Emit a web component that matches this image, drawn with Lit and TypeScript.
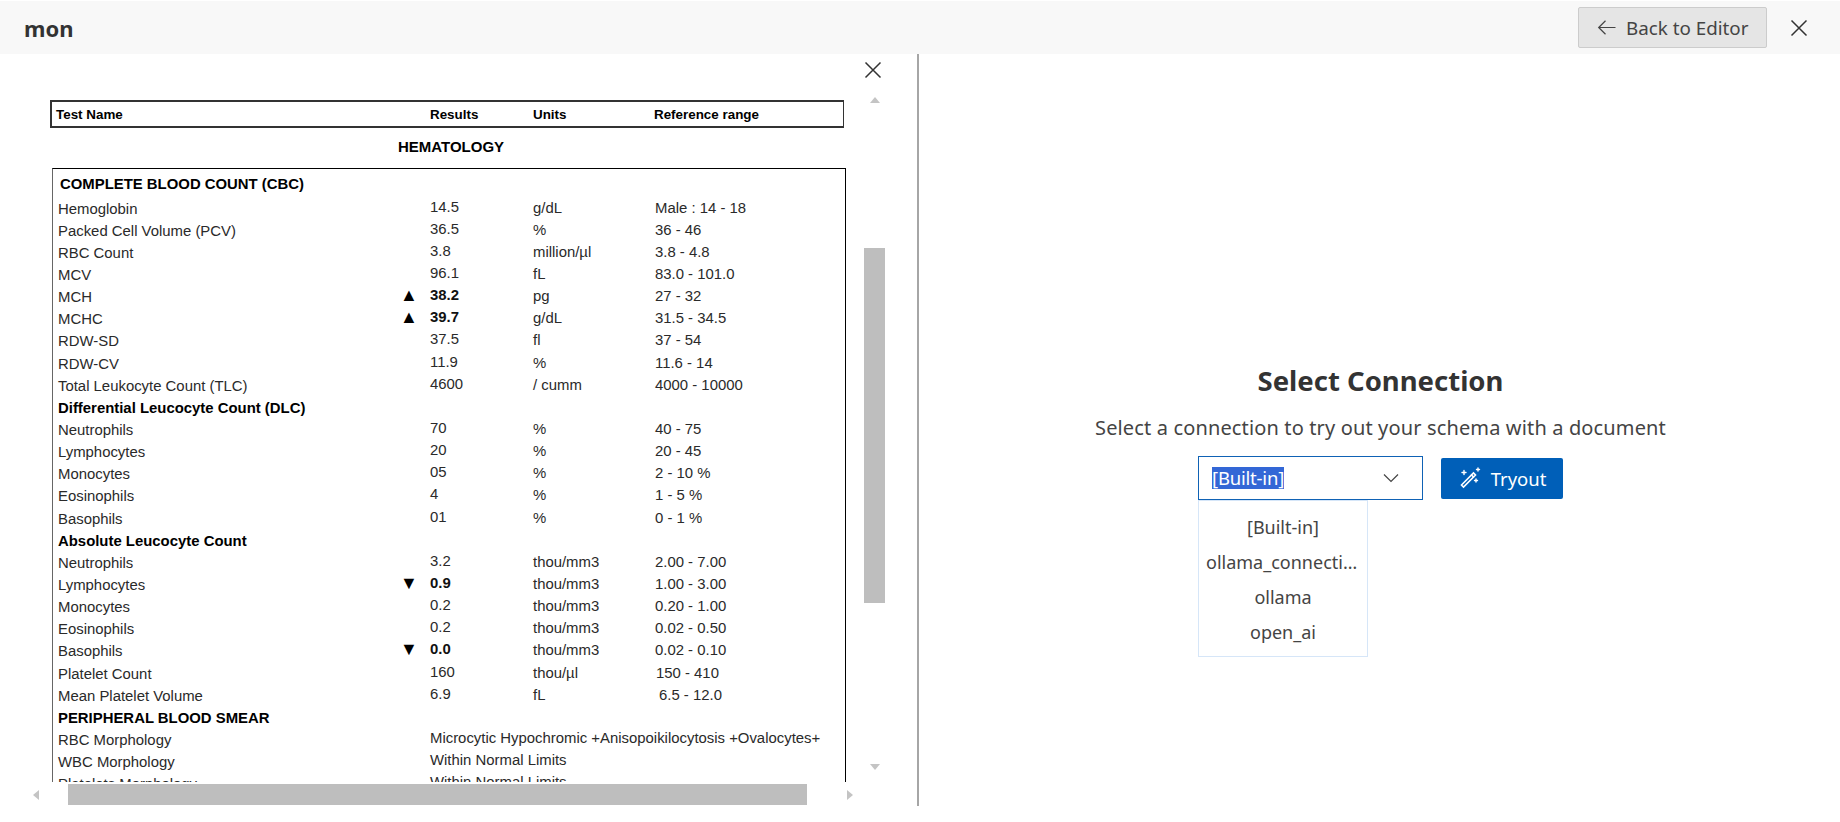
import { LitElement, html, css } from 'lit';
import { customElement } from 'lit/decorators.js';

type Row = { name: string; flag?: string; result?: string; units?: string; range?: string; high?: boolean; head?: boolean; wide?: boolean; nudge?: number };

const rows: Row[] = [
  { name: 'COMPLETE BLOOD COUNT (CBC)', head: true, nudge: 2 },
  { name: 'Hemoglobin', result: '14.5', units: 'g/dL', range: 'Male : 14 - 18' },
  { name: 'Packed Cell Volume (PCV)', result: '36.5', units: '%', range: '36 - 46' },
  { name: 'RBC Count', result: '3.8', units: 'million/µl', range: '3.8 - 4.8' },
  { name: 'MCV', result: '96.1', units: 'fL', range: '83.0 - 101.0' },
  { name: 'MCH', flag: '▲', result: '38.2', high: true, units: 'pg', range: '27 - 32' },
  { name: 'MCHC', flag: '▲', result: '39.7', high: true, units: 'g/dL', range: '31.5 - 34.5' },
  { name: 'RDW-SD', result: '37.5', units: 'fl', range: '37 - 54' },
  { name: 'RDW-CV', result: '11.9', units: '%', range: '11.6 - 14' },
  { name: 'Total Leukocyte Count (TLC)', result: '4600', units: '/ cumm', range: '4000 - 10000' },
  { name: 'Differential Leucocyte Count (DLC)', head: true },
  { name: 'Neutrophils', result: '70', units: '%', range: '40 - 75' },
  { name: 'Lymphocytes', result: '20', units: '%', range: '20 - 45' },
  { name: 'Monocytes', result: '05', units: '%', range: '2 - 10 %' },
  { name: 'Eosinophils', result: '4', units: '%', range: '1 - 5 %' },
  { name: 'Basophils', result: '01', units: '%', range: '0 - 1 %' },
  { name: 'Absolute Leucocyte Count', head: true },
  { name: 'Neutrophils', result: '3.2', units: 'thou/mm3', range: '2.00 - 7.00' },
  { name: 'Lymphocytes', flag: '▼', result: '0.9', high: true, units: 'thou/mm3', range: '1.00 - 3.00' },
  { name: 'Monocytes', result: '0.2', units: 'thou/mm3', range: '0.20 - 1.00' },
  { name: 'Eosinophils', result: '0.2', units: 'thou/mm3', range: '0.02 - 0.50' },
  { name: 'Basophils', flag: '▼', result: '0.0', high: true, units: 'thou/mm3', range: '0.02 - 0.10' },
  { name: 'Platelet Count', result: '160', units: 'thou/µl', range: '150 - 410', nudge: 1 },
  { name: 'Mean Platelet Volume', result: '6.9', units: 'fL', range: '6.5 - 12.0', nudge: 4 },
  { name: 'PERIPHERAL BLOOD SMEAR', head: true },
  { name: 'RBC Morphology', result: 'Microcytic Hypochromic +Anisopoikilocytosis +Ovalocytes+', wide: true },
  { name: 'WBC Morphology', result: 'Within Normal Limits', wide: true },
  { name: 'Platelets Morphology', result: 'Within Normal Limits', wide: true },
];

const connections = ['[Built-in]', 'ollama_connection_1', 'ollama', 'open_ai'];

@customElement('app-report')
export class AppReport extends LitElement {
  static styles = css`
    :host {
      display: block;
      height: 100%;
      overflow: hidden;
      font-family: 'Liberation Sans', Arial, sans-serif;
      color: #2a2a2a;
      padding-top: 46px;
      box-sizing: border-box;
    }

    .head-box {
      display: grid;
      grid-template-columns: 374px 103px 121px 1fr;
      align-items: center;
      margin-left: 50px;
      width: 794px;
      height: 28px;
      box-sizing: border-box;
      border: 1px solid #333;
      border-width: 2px 1px 2px 2px;
      padding-left: 4px;
      font-size: 13.4px;
      font-weight: bold;
      color: #000;
    }

    .section {
      margin: 0 0 0 50px;
      width: 795px;
      height: 40px;
      line-height: 38px;
      padding-left: 7px;
      box-sizing: border-box;
      text-align: center;
      font-size: 15px;
      font-weight: bold;
      color: #000;
    }

    .box {
      margin-left: 52px;
      width: 794px;
      box-sizing: border-box;
      border: 1px solid #000;
      border-left-color: #666;
      padding: 4px 0 0 5px;
    }

    .row {
      display: grid;
      grid-template-columns: 342px 30px 103px 122px 1fr;
      height: 22.15px;
      line-height: 22px;
      font-size: 14.9px;
      white-space: nowrap;
    }

    .row:first-child {
      margin-bottom: 2.5px;
    }

    .row .head {
      font-weight: bold;
      color: #000;
      font-size: 14.9px;
    }

    .result,
    .flag {
      line-height: 18px;
    }

    .units,
    .range {
      line-height: 20px;
    }

    .flag {
      color: #000;
      font-size: 18px;
    }

    .high {
      font-weight: bold;
      color: #111;
    }

    .wide {
      grid-column: 3 / -1;
    }
  `;

  render() {
    return html`
      <div class="head-box">
        <span>Test Name</span><span>Results</span><span>Units</span><span>Reference range</span>
      </div>
      <div class="section">HEMATOLOGY</div>
      <div class="box">
        ${rows.map((r) => html`
          <div class="row">
            <span class=${r.head ? 'head' : ''} style=${r.nudge && r.head ? `padding-left:${r.nudge}px` : ''}>${r.name}</span>
            ${r.head ? '' : html`
              <span class="flag">${r.flag ?? ''}</span>
              <span class="result ${r.high ? 'high' : ''} ${r.wide ? 'wide' : ''}">${r.result}</span>
              ${r.wide ? '' : html`
                <span class="units">${r.units}</span>
                <span class="range" style=${r.nudge ? `padding-left:${r.nudge}px` : ''}>${r.range}</span>
              `}
            `}
          </div>
        `)}
      </div>
    `;
  }
}

@customElement('app-root')
export class AppRoot extends LitElement {
  static styles = css`
    :host {
      display: block;
      height: 822px;
      overflow: hidden;
      background: #fff;
      font-family: 'Noto Sans', 'Open Sans', sans-serif;
      color: #333;
    }

    .topbar {
      display: flex;
      align-items: center;
      box-sizing: border-box;
      height: 53px;
      margin-top: 1px;
      padding: 0 31px 0 24px;
      background: #f8f8f8;
    }

    .title {
      flex: 1;
      font-size: 22px;
      font-weight: 700;
      color: #333;
    }

    .back {
      display: flex;
      align-items: center;
      gap: 9px;
      box-sizing: border-box;
      height: 41px;
      width: 189px;
      padding: 0 0 0 18px;
      margin-right: 22px;
      border: 1px solid #ccc;
      border-radius: 2px;
      background: #e5e5e5;
      color: #444;
      font: inherit;
      font-size: 18.8px;
    }

    .icon-btn {
      display: flex;
      padding: 0;
      border: 0;
      background: none;
      color: #333;
    }

    .split {
      display: flex;
      height: 752px;
    }

    .left {
      position: relative;
      display: grid;
      grid-template-columns: 864px 21px 1fr;
      grid-template-rows: 728px 1fr;
      width: 917px;
      border-right: 2px solid #a6a6a6;
    }

    .doc {
      min-width: 0;
      min-height: 0;
    }

    .vbar {
      display: flex;
      flex-direction: column;
      align-items: center;
    }

    .up {
      margin-top: 43px;
      width: 0;
      border: 5.5px solid transparent;
      border-top: 0;
      border-bottom: 6px solid #c4c4c4;
    }

    .vthumb {
      flex: none;
      margin-top: 145px;
      width: 21px;
      height: 355px;
      background: #bebebe;
    }

    .down {
      margin-top: 161px;
      width: 0;
      border: 5.5px solid transparent;
      border-bottom: 0;
      border-top: 6px solid #c4c4c4;
    }

    .hbar {
      grid-column: 1 / 3;
      display: flex;
      align-items: center;
      height: 21px;
      margin-top: 2px;
    }

    .lt {
      margin-left: 33px;
      border: 5.5px solid transparent;
      border-left: 0;
      border-right: 6px solid #c4c4c4;
    }

    .hthumb {
      margin-left: 29px;
      width: 739px;
      height: 21px;
      background: #bebebe;
    }

    .rt {
      margin-left: 40px;
      border: 5.5px solid transparent;
      border-right: 0;
      border-left: 6px solid #c4c4c4;
    }

    .doc-close {
      position: absolute;
      top: 6px;
      left: 863px;
      color: #333;
    }

    .right {
      flex: 1;
      display: flex;
      flex-direction: column;
      align-items: center;
      padding: 307px 0 0 2px;
      box-sizing: border-box;
    }

    h2 {
      margin: 0;
      font-size: 27.5px;
      line-height: 40px;
      font-weight: 700;
      color: #333;
    }

    .sub {
      margin: 12px 0 0;
      font-size: 20px;
      letter-spacing: 0.14px;
      line-height: 30px;
      color: #444;
    }

    .controls {
      display: flex;
      align-items: center;
      gap: 18px;
      margin-top: 13px;
    }

    .combo {
      position: relative;
      display: flex;
      align-items: center;
      justify-content: space-between;
      box-sizing: border-box;
      width: 225px;
      height: 44px;
      padding: 0 22px 0 13px;
      border: 1px solid #0f62b5;
    }

    .selected {
      background: #3367d6;
      color: #fff;
      font-size: 18.5px;
      line-height: 22px;
      letter-spacing: -0.2px;
    }

    .menu {
      position: absolute;
      top: 43px;
      left: -1px;
      box-sizing: border-box;
      width: 170px;
      height: 157px;
      padding: 9px 7px 0;
      background: #fff;
      border: 1px solid #d6e6f8;
    }

    .menu div {
      height: 35px;
      line-height: 35px;
      font-size: 18px;
      text-align: center;
      color: #444;
      overflow: hidden;
      white-space: nowrap;
      text-overflow: ellipsis;
    }

    .tryout {
      display: flex;
      align-items: center;
      justify-content: center;
      gap: 9px;
      box-sizing: border-box;
      width: 122px;
      height: 41px;
      padding: 0;
      border: 0;
      border-radius: 2px;
      background: #005fb8;
      color: #fff;
      font: inherit;
      font-size: 18.5px;
    }
  `;

  render() {
    return html`
      <div class="topbar">
        <div class="title">mon</div>
        <button class="back">
          <svg width="20" height="20" viewBox="0 0 20 20" fill="none" stroke="currentColor" stroke-width="1.2"><path d="M1.5 9.5h17M8.5 2.8 1.7 9.5l6.8 6.7"/></svg>
          Back to Editor
        </button>
        <button class="icon-btn" aria-label="Close">
          <svg width="20" height="20" viewBox="0 0 20 20" fill="none" stroke="currentColor" stroke-width="1.5"><path d="M2.5 2.5l15 15M17.5 2.5l-15 15"/></svg>
        </button>
      </div>
      <div class="split">
        <section class="left">
          <div class="doc"><app-report></app-report></div>
          <div class="vbar">
            <div class="up"></div>
            <div class="vthumb"></div>
            <div class="down"></div>
          </div>
          <div></div>
          <div class="hbar">
            <div class="lt"></div>
            <div class="hthumb"></div>
            <div class="rt"></div>
          </div>
          <button class="icon-btn doc-close" aria-label="Close document">
            <svg width="20" height="20" viewBox="0 0 20 20" fill="none" stroke="currentColor" stroke-width="1.5"><path d="M2.5 2.5l15 15M17.5 2.5l-15 15"/></svg>
          </button>
        </section>
        <section class="right">
          <h2>Select Connection</h2>
          <p class="sub">Select a connection to try out your schema with a document</p>
          <div class="controls">
            <div class="combo">
              <span class="selected">[Built-in]</span>
              <svg width="18" height="18" viewBox="0 0 18 18" fill="none" stroke="#444" stroke-width="1.2"><path d="M2 5.5l7 7 7-7"/></svg>
              <div class="menu">
                ${connections.map((c) => html`<div>${c}</div>`)}
              </div>
            </div>
            <button class="tryout">
              <svg width="24" height="24" viewBox="0 0 24 24" fill="none" stroke="#fff" stroke-width="1.6" stroke-linecap="round"><path d="M3.5 20.5 15.5 8.5l2 2-12 12z" transform="translate(0 -1.5)"/><path d="M13.5 9l2 2"/><path d="M6 4.5v4M4 6.5h4M20 2v3M18.5 3.5h3M18 13v3M16.5 14.5h3" stroke-width="1.4"/></svg>
              Tryout
            </button>
          </div>
        </section>
      </div>
    `;
  }
}

declare global {
  interface HTMLElementTagNameMap {
    'app-root': AppRoot;
    'app-report': AppReport;
  }
}
